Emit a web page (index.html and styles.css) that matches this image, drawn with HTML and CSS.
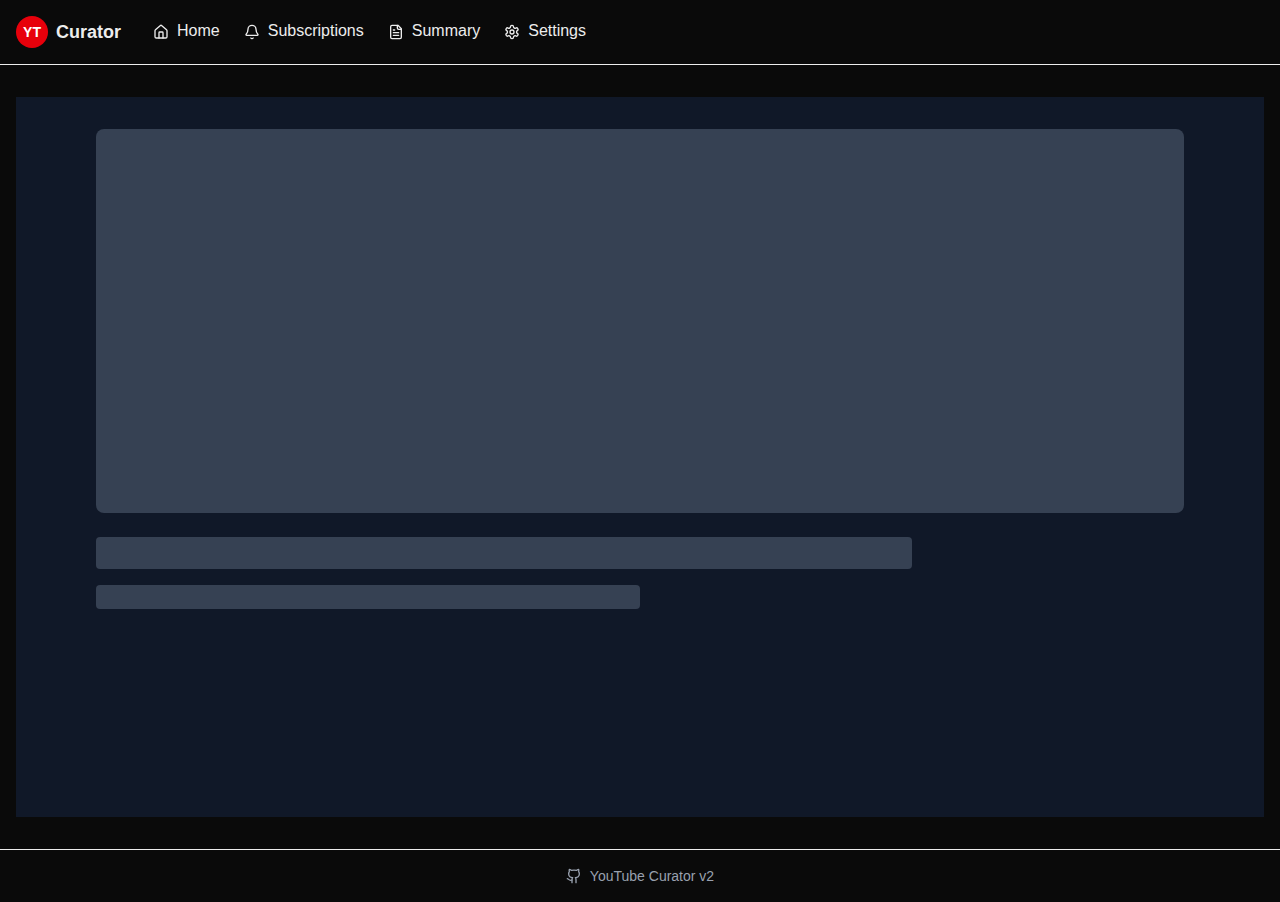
FILE: index.html
```html
<!DOCTYPE html>
<html lang="en">
<head>
<meta charset="utf-8">
<meta name="viewport" content="width=device-width, initial-scale=1">
<title>YouTube Curator</title>
<link rel="stylesheet" href="styles.css">
</head>
<body>
<header class="site-header">
  <a class="brand" href="#"><span class="brand-mark">YT</span><span class="brand-name">Curator</span></a>
  <nav class="nav" aria-label="Main">
    <a class="nav-link" href="#"><svg class="icon" viewBox="0 0 24 24" aria-hidden="true"><path d="M15 21v-8a1 1 0 0 0-1-1h-4a1 1 0 0 0-1 1v8"/><path d="M3 10a2 2 0 0 1 .709-1.528l7-5.999a2 2 0 0 1 2.582 0l7 5.999A2 2 0 0 1 21 10v9a2 2 0 0 1-2 2H5a2 2 0 0 1-2-2z"/></svg><span class="nav-text">Home</span></a>
    <a class="nav-link" href="#"><svg class="icon" viewBox="0 0 24 24" aria-hidden="true"><path d="M10.268 21a2 2 0 0 0 3.464 0"/><path d="M3.262 15.326A1 1 0 0 0 4 17h16a1 1 0 0 0 .74-1.673C19.41 13.956 18 12.499 18 8A6 6 0 0 0 6 8c0 4.499-1.411 5.956-2.738 7.326"/></svg><span class="nav-text">Subscriptions</span></a>
    <a class="nav-link" href="#"><svg class="icon" viewBox="0 0 24 24" aria-hidden="true"><path d="M15 2H6a2 2 0 0 0-2 2v16a2 2 0 0 0 2 2h12a2 2 0 0 0 2-2V7Z"/><path d="M14 2v4a2 2 0 0 0 2 2h4"/><path d="M10 9H8"/><path d="M16 13H8"/><path d="M16 17H8"/></svg><span class="nav-text">Summary</span></a>
    <a class="nav-link" href="#"><svg class="icon" viewBox="0 0 24 24" aria-hidden="true"><path d="M12.22 2h-.44a2 2 0 0 0-2 2v.18a2 2 0 0 1-1 1.73l-.43.25a2 2 0 0 1-2 0l-.15-.08a2 2 0 0 0-2.73.73l-.22.38a2 2 0 0 0 .73 2.73l.15.1a2 2 0 0 1 1 1.72v.51a2 2 0 0 1-1 1.74l-.15.09a2 2 0 0 0-.73 2.73l.22.38a2 2 0 0 0 2.73.73l.15-.08a2 2 0 0 1 2 0l.43.25a2 2 0 0 1 1 1.73V20a2 2 0 0 0 2 2h.44a2 2 0 0 0 2-2v-.18a2 2 0 0 1 1-1.73l.43-.25a2 2 0 0 1 2 0l.15.08a2 2 0 0 0 2.73-.73l.22-.39a2 2 0 0 0-.73-2.73l-.15-.08a2 2 0 0 1-1-1.74v-.5a2 2 0 0 1 1-1.74l.15-.09a2 2 0 0 0 .73-2.73l-.22-.38a2 2 0 0 0-2.73-.73l-.15.08a2 2 0 0 1-2 0l-.43-.25a2 2 0 0 1-1-1.73V4a2 2 0 0 0-2-2z"/><circle cx="12" cy="12" r="3"/></svg><span class="nav-text">Settings</span></a>
  </nav>
</header>
<main class="main">
  <section class="panel" aria-label="Loading" aria-busy="true">
    <div class="skeleton">
      <div class="bone bone-video"></div>
      <div class="bone bone-title"></div>
      <div class="bone bone-meta"></div>
    </div>
  </section>
</main>
<footer class="site-footer">
  <a class="footer-link" href="#"><svg class="icon" viewBox="0 0 24 24" aria-hidden="true"><path d="M15 22v-4a4.8 4.8 0 0 0-1-3.5c3 0 6-2 6-5.5.08-1.25-.27-2.48-1-3.5.28-1.15.28-2.35 0-3.5 0 0-1 0-3 1.5-2.64-.5-5.36-.5-8 0C6 2 5 2 5 2c-.3 1.15-.3 2.35 0 3.5A5.403 5.403 0 0 0 4 9c0 3.5 3 5.5 6 5.5-.39.49-.68 1.05-.85 1.65-.17.6-.22 1.23-.15 1.85v4"/><path d="M9 18c-4.51 2-5-2-7-2"/></svg><span>YouTube Curator v2</span></a>
</footer>
</body>
</html>
```
FILE: styles.css
```css
*, *::before, *::after { box-sizing: border-box; }
body {
  margin: 0;
  min-height: 100vh;
  display: flex;
  flex-direction: column;
  background: #0a0a0a;
  color: #ededed;
  font: 16px/24px "Liberation Sans", Arial, sans-serif;
}
a { color: inherit; text-decoration: none; }
.icon {
  width: 16px;
  height: 16px;
  flex: none;
  fill: none;
  stroke: currentColor;
  stroke-width: 2;
  stroke-linecap: round;
  stroke-linejoin: round;
}
.site-header {
  display: flex;
  align-items: center;
  gap: 32px;
  padding: 16px;
  border-bottom: 1px solid #ededed;
}
.brand { display: flex; align-items: center; gap: 8px; }
.brand-mark {
  display: grid;
  place-items: center;
  width: 32px;
  height: 32px;
  border-radius: 50%;
  background: #e7000b;
  color: #fff;
  font-size: 14px;
  font-weight: 700;
  line-height: 20px;
}
.brand-name { font-size: 18px; font-weight: 700; line-height: 28px; }
.nav { display: flex; gap: 24px; }
.nav-link { display: flex; align-items: center; gap: 8px; }
.nav-text { padding-bottom: 2px; }
.main { flex: 1; display: flex; padding: 32px 16px; }
.panel { flex: 1; padding: 32px 16px; background: #101828; }
.skeleton { max-width: 1152px; margin: 0 auto; padding: 0 32px; }
.bone { border-radius: 4px; background: #364153; }
.bone-video { height: 384px; margin-bottom: 24px; border-radius: 8px; }
.bone-title { width: 75%; height: 32px; margin-bottom: 16px; }
.bone-meta { width: 50%; height: 24px; }
.site-footer {
  display: flex;
  justify-content: center;
  padding: 16px;
  border-top: 1px solid #ededed;
  color: #99a1af;
  font-size: 14px;
  line-height: 20px;
}
.footer-link { display: flex; align-items: center; gap: 8px; }
```
